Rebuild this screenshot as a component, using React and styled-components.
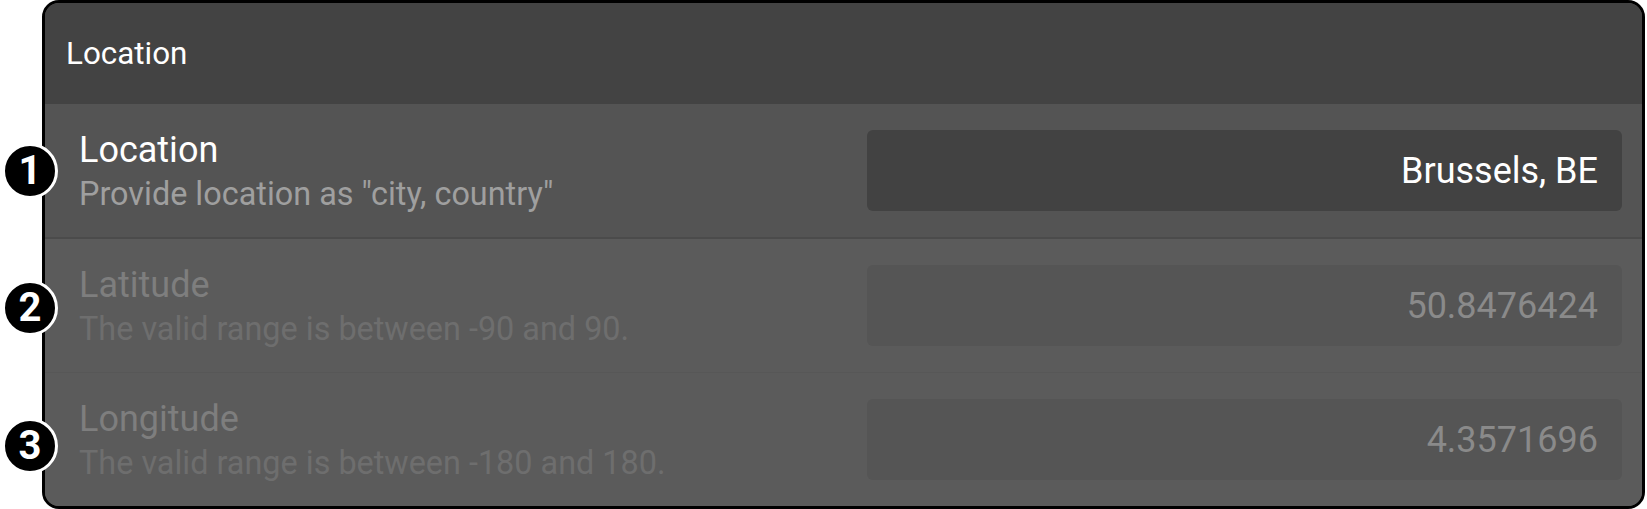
import React from "react";
import styled, { createGlobalStyle } from "styled-components";

const Global = createGlobalStyle`
  html, body { margin: 0; padding: 0; background: #ffffff; }
  body { font-family: Roboto, "Liberation Sans", sans-serif; }
`;

const Stage = styled.div`
  position: relative;
  width: 1647px;
  height: 509px;
`;

const Card = styled.section`
  margin-left: 42px;
  width: 1603px;
  height: 509px;
  box-sizing: border-box;
  border: 3px solid #000;
  border-radius: 17px;
  overflow: hidden;
  display: flex;
  flex-direction: column;
  background: #5b5b5b;
`;

const Header = styled.header`
  height: 101px;
  flex: none;
  display: flex;
  align-items: center;
  padding-left: 21px;
  background: #434343;
  color: #ffffff;
  font-size: 31.4px;
  line-height: 1;
`;

const Row = styled.div`
  flex: none;
  height: ${(p) => p.$h}px;
  box-sizing: border-box;
  display: flex;
  align-items: center;
  padding: 0 20px 0 34px;
  background: ${(p) => (p.$disabled ? "#5b5b5b" : "#545454")};
  border-bottom: ${(p) => p.$line};
`;

const Info = styled.div`
  flex: 1;
  display: flex;
  flex-direction: column;
  padding-top: 2px;
`;

const Title = styled.div`
  font-size: 36px;
  line-height: 45px;
  color: ${(p) => (p.$disabled ? "#7e7e7e" : "#ffffff")};
`;

const Desc = styled.div`
  font-size: 32.4px;
  line-height: 42px;
  color: ${(p) => (p.$disabled ? "#6e6e6e" : "#9f9f9f")};
`;

const Field = styled.div`
  width: 755px;
  height: 81px;
  box-sizing: border-box;
  border-radius: 6px;
  display: flex;
  align-items: center;
  justify-content: flex-end;
  padding-right: 24px;
  font-size: 36px;
  line-height: 1;
  background: ${(p) => (p.$disabled ? "#555555" : "#424242")};
  color: ${(p) => (p.$disabled ? "#8a8a8a" : "#ffffff")};
`;

const Badge = styled.div`
  position: absolute;
  left: 2px;
  top: ${(p) => p.$top}px;
  width: 56px;
  height: 56px;
  box-sizing: border-box;
  border-radius: 50%;
  border: 3px solid #ffffff;
  background: #000000;
  color: #ffffff;
  display: flex;
  align-items: center;
  justify-content: center;
  font-family: Roboto, "Liberation Sans", sans-serif;
  font-weight: 700;
  font-size: 40px;
  line-height: 1;
`;

const rows = [
  {
    title: "Location",
    desc: 'Provide location as "city, country"',
    value: "Brussels, BE",
    disabled: false,
    h: 135,
    line: "2px solid #4b4b4b",
  },
  {
    title: "Latitude",
    desc: "The valid range is between -90 and 90.",
    value: "50.8476424",
    disabled: true,
    h: 134,
    line: "1px solid #575757",
  },
  {
    title: "Longitude",
    desc: "The valid range is between -180 and 180.",
    value: "4.3571696",
    disabled: true,
    h: 133,
    line: "none",
  },
];

const badges = [
  { n: "1", top: 143 },
  { n: "2", top: 280 },
  { n: "3", top: 418 },
];

export default function App() {
  return (
    <>
      <Global />
      <Stage>
        <Card>
          <Header>Location</Header>
          {rows.map((r) => (
            <Row key={r.title} $disabled={r.disabled} $h={r.h} $line={r.line}>
              <Info>
                <Title $disabled={r.disabled}>{r.title}</Title>
                <Desc $disabled={r.disabled}>{r.desc}</Desc>
              </Info>
              <Field $disabled={r.disabled}>{r.value}</Field>
            </Row>
          ))}
        </Card>
        {badges.map((b) => (
          <Badge key={b.n} $top={b.top}>
            {b.n}
          </Badge>
        ))}
      </Stage>
    </>
  );
}
